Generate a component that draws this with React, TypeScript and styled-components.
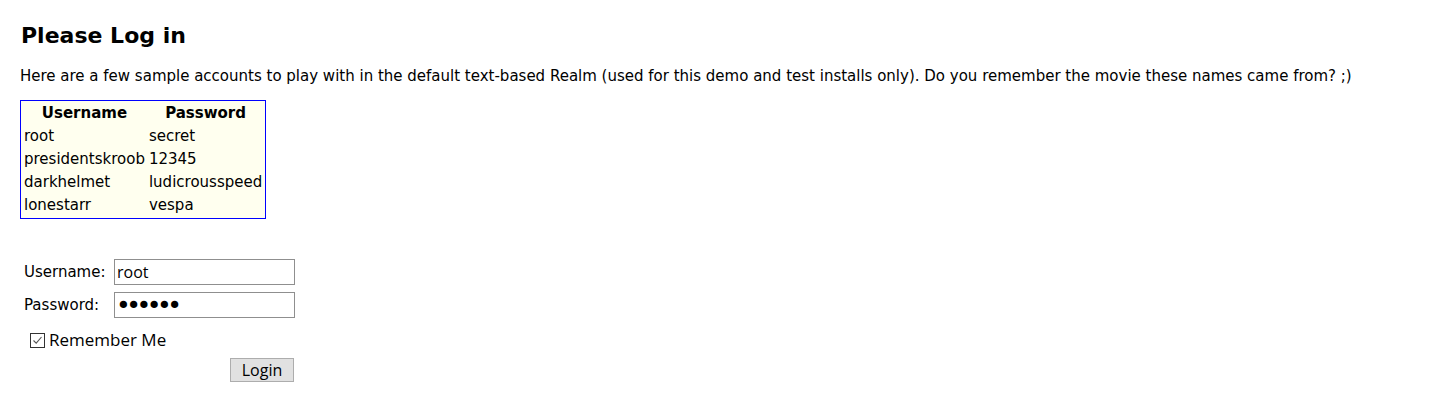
import styled, { createGlobalStyle } from 'styled-components'

const GlobalStyle = createGlobalStyle`
  html, body {
    margin: 0;
    padding: 0;
    background: #fff;
  }
  body {
    font-family: 'DejaVu Sans', Verdana, sans-serif;
    font-size: 15px;
    color: #000;
  }
`

const Page = styled.div`
  padding: 22px 20px;
`

const Title = styled.h1`
  margin: 0 0 17px 1px;
  font-size: 22px;
  font-weight: bold;
  line-height: 28px;
`

const Intro = styled.p`
  margin: 0 0 15px 0;
  font-size: 15px;
  line-height: 18px;
`

const AccountTable = styled.table`
  border: 1px solid #0000ff;
  background-color: #ffffef;
  border-collapse: separate;
  border-spacing: 2px;
  font-size: 15px;

  th,
  td {
    padding: 1px;
    text-align: left;
    line-height: 19px;
  }
  th {
    text-align: center;
    font-weight: bold;
  }
`

const LoginForm = styled.form`
  margin-top: 40px;
  padding-left: 4px;
`

const FieldRow = styled.div`
  display: flex;
  align-items: center;
  height: 26px;
  margin-bottom: 7px;
`

const Label = styled.label`
  width: 90px;
  font-size: 15px;
`

const TextInput = styled.input`
  box-sizing: border-box;
  width: 181px;
  height: 26px;
  border: 1px solid #8f8f8f;
  padding: 1px 2px;
  font-family: 'Open Sans', 'Liberation Sans', sans-serif;
  font-size: 16px;
  color: #000;
  outline: none;

  &[type='password'] {
    font-family: 'DejaVu Sans', sans-serif;
    font-size: 25px;
    letter-spacing: -4.5px;
    padding-left: 1px;
  }
`

const RememberRow = styled.label`
  display: flex;
  align-items: center;
  gap: 4px;
  margin: 12px 0 0 6px;
  font-family: 'Open Sans', 'Liberation Sans', sans-serif;
  font-size: 17px;
  line-height: 20px;
`

const CheckBox = styled.span`
  box-sizing: border-box;
  display: inline-flex;
  align-items: center;
  justify-content: center;
  width: 15px;
  height: 15px;
  border: 1px solid #333;
  background: #fff;
`

const ButtonRow = styled.div`
  display: flex;
  justify-content: flex-end;
  width: 270px;
  margin-top: 8px;
`

const LoginButton = styled.button`
  box-sizing: border-box;
  width: 64px;
  height: 24px;
  border: 1px solid #adadad;
  background: #e1e1e1;
  font-family: 'Open Sans', 'Liberation Sans', sans-serif;
  font-size: 16px;
  line-height: 20px;
  padding: 0;
  color: #000;
`

const accounts = [
  ['root', 'secret'],
  ['presidentskroob', '12345'],
  ['darkhelmet', 'ludicrousspeed'],
  ['lonestarr', 'vespa'],
]

export default function App() {
  return (
    <Page>
      <GlobalStyle />
      <Title>Please Log in</Title>
      <Intro>
        Here are a few sample accounts to play with in the default text-based Realm (used for this demo and test
        installs only). Do you remember the movie these names came from? ;)
      </Intro>
      <AccountTable>
        <thead>
          <tr>
            <th>Username</th>
            <th>Password</th>
          </tr>
        </thead>
        <tbody>
          {accounts.map(([user, pass]) => (
            <tr key={user}>
              <td>{user}</td>
              <td>{pass}</td>
            </tr>
          ))}
        </tbody>
      </AccountTable>
      <LoginForm onSubmit={(e) => e.preventDefault()}>
        <FieldRow>
          <Label htmlFor="username">Username:</Label>
          <TextInput id="username" type="text" defaultValue="root" />
        </FieldRow>
        <FieldRow>
          <Label htmlFor="password">Password:</Label>
          <TextInput id="password" type="password" defaultValue="secret" />
        </FieldRow>
        <RememberRow>
          <CheckBox>
            <svg width="11" height="11" viewBox="0 0 11 11">
              <path d="M1.5 5.5 L4.2 8.2 L9.5 2" fill="none" stroke="#555" strokeWidth="1.1" />
            </svg>
          </CheckBox>
          Remember Me
        </RememberRow>
        <ButtonRow>
          <LoginButton type="submit">Login</LoginButton>
        </ButtonRow>
      </LoginForm>
    </Page>
  )
}
